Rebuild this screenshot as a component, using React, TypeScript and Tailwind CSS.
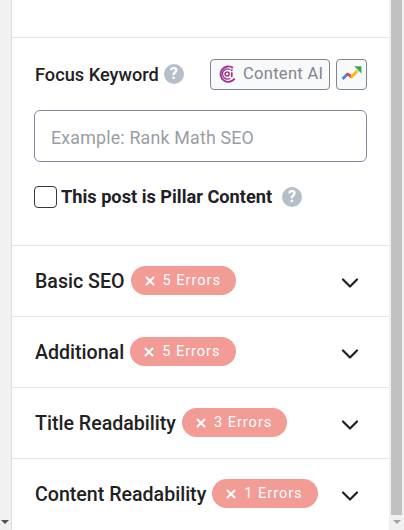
import { ChevronDown, X } from "lucide-react";

const Help = ({ className = "" }: { className?: string }) => (
  <span className={`flex h-5 w-5 shrink-0 items-center justify-center rounded-full bg-[#b5bfc9] text-[16px] font-bold leading-none text-white ${className}`}>
    ?
  </span>
);

const ContentAiIcon = () => (
  <svg viewBox="0 0 20 20" className="h-[18px] w-[18px]" fill="none">
    <path d="M15.5 3.2A8.6 8.6 0 1 0 17.5 15" stroke="#a8328a" strokeWidth="2.2" />
    <path d="M12.5 5.2A5.6 5.6 0 1 0 12.5 14.8" stroke="#8e3a9d" strokeWidth="1.4" />
    <circle cx="9" cy="10" r="2.3" stroke="#a0357f" strokeWidth="1.7" />
    <path d="M14.2 8v5.5" stroke="#a0357f" strokeWidth="1.9" />
    <circle cx="14.2" cy="5.8" r="1.1" fill="#a0357f" />
  </svg>
);

const TrendsIcon = () => (
  <svg viewBox="0 0 24 20" className="h-[18px] w-[22px]" fill="none" strokeWidth="3.2">
    <path d="M1.5 15.5 7.5 9.5" stroke="#4285f4" />
    <path d="M6.5 9.5 12 13.5" stroke="#ea4335" />
    <path d="M11 13.5 18 6.5" stroke="#fbbc04" />
    <path d="M14.5 1.5H22.5V9.5Z" fill="#34a853" stroke="none" />
  </svg>
);

const sections = [
  { title: "Basic SEO", errors: 5 },
  { title: "Additional", errors: 5 },
  { title: "Title Readability", errors: 3 },
  { title: "Content Readability", errors: 1 },
];

const Row = ({ title, errors }: { title: string; errors: number }) => (
  <div className="flex h-[71px] items-center border-t border-[#e2e4e7] pl-[23px] pr-[25px]">
    <h4 className="mt-px text-[19.6px] font-medium leading-none text-[#1f2124]">{title}</h4>
    <span className="mb-px ml-[6px] flex h-[29px] items-center rounded-full bg-[#f39c96] pl-[12px] pr-[15px] text-[14.5px] tracking-[1px] text-white">
      <X className="mr-[6px] h-[14px] w-[14px]" strokeWidth={3.4} />
      {errors} Errors
    </span>
    <ChevronDown className="ml-auto mt-[4px] h-[28px] w-[28px] text-[#1f2124]" strokeWidth={1.9} />
  </div>
);

export default function App() {
  return (
    <div className="flex h-[530px] w-[404px] overflow-hidden bg-white font-['Roboto',sans-serif]">
      <div className="flex w-[11px] shrink-0 flex-col justify-end bg-[#f1f1f1]">
        <span className="mb-[6px] ml-[1px] h-0 w-0 border-x-[4px] border-t-[4px] border-x-transparent border-t-[#505050]" />
      </div>

      <main className="flex w-[378px] shrink-0 flex-col border-l border-[#dcdcde]">
        <div className="h-[37px] shrink-0" />

        <section className="h-[208px] shrink-0 border-t border-[#e2e4e7] px-[22px] pt-[20px]">
          <div className="flex h-[32px] items-center">
            <label className="ml-[1px] mt-[1px] text-[18.2px] font-medium text-[#1f2124]">Focus Keyword</label>
            <Help className="ml-[5px]" />
            <button className="ml-auto flex h-[31px] w-[120px] items-center rounded-[4px] border border-[#7f868d] bg-[#f8f9fa] pl-[8px] text-[16.5px] tracking-[0.3px] text-[#7f868d]">
              <ContentAiIcon />
              <span className="ml-[6px] mt-px">Content AI</span>
            </button>
            <button className="ml-[6px] flex h-[31px] w-[31px] items-center justify-center rounded-[4px] border border-[#7f868d] bg-[#f8f9fa]">
              <TrendsIcon />
            </button>
          </div>

          <input
            placeholder="Example: Rank Math SEO"
            className="mt-[20px] block h-[52px] w-full rounded-[6px] border border-[#7f8b9c] bg-white px-4 pt-[2px] text-[17.8px] tracking-[0.2px] outline-none placeholder:text-[#9a9ea3]"
          />

          <div className="mt-[21px] flex items-center">
            <span className="h-[22px] w-[23px] rounded-[4px] border border-[#33383d] bg-white" />
            <span className="ml-[4px] text-[18.2px] font-bold text-[#1f2124]">This post is Pillar Content</span>
            <Help className="ml-[10px] mt-[1px]" />
          </div>
        </section>

        {sections.map((s) => (
          <Row key={s.title} title={s.title} errors={s.errors} />
        ))}
      </main>

      <div className="flex w-[15px] shrink-0 flex-col bg-[#f1f1f1] px-[2px]">
        <div className="h-[515px] bg-[#c1c1c1]" />
        <span className="ml-[2px] mt-[5px] h-0 w-0 border-x-[4px] border-t-[4px] border-x-transparent border-t-[#a3a3a3]" />
      </div>
    </div>
  );
}
